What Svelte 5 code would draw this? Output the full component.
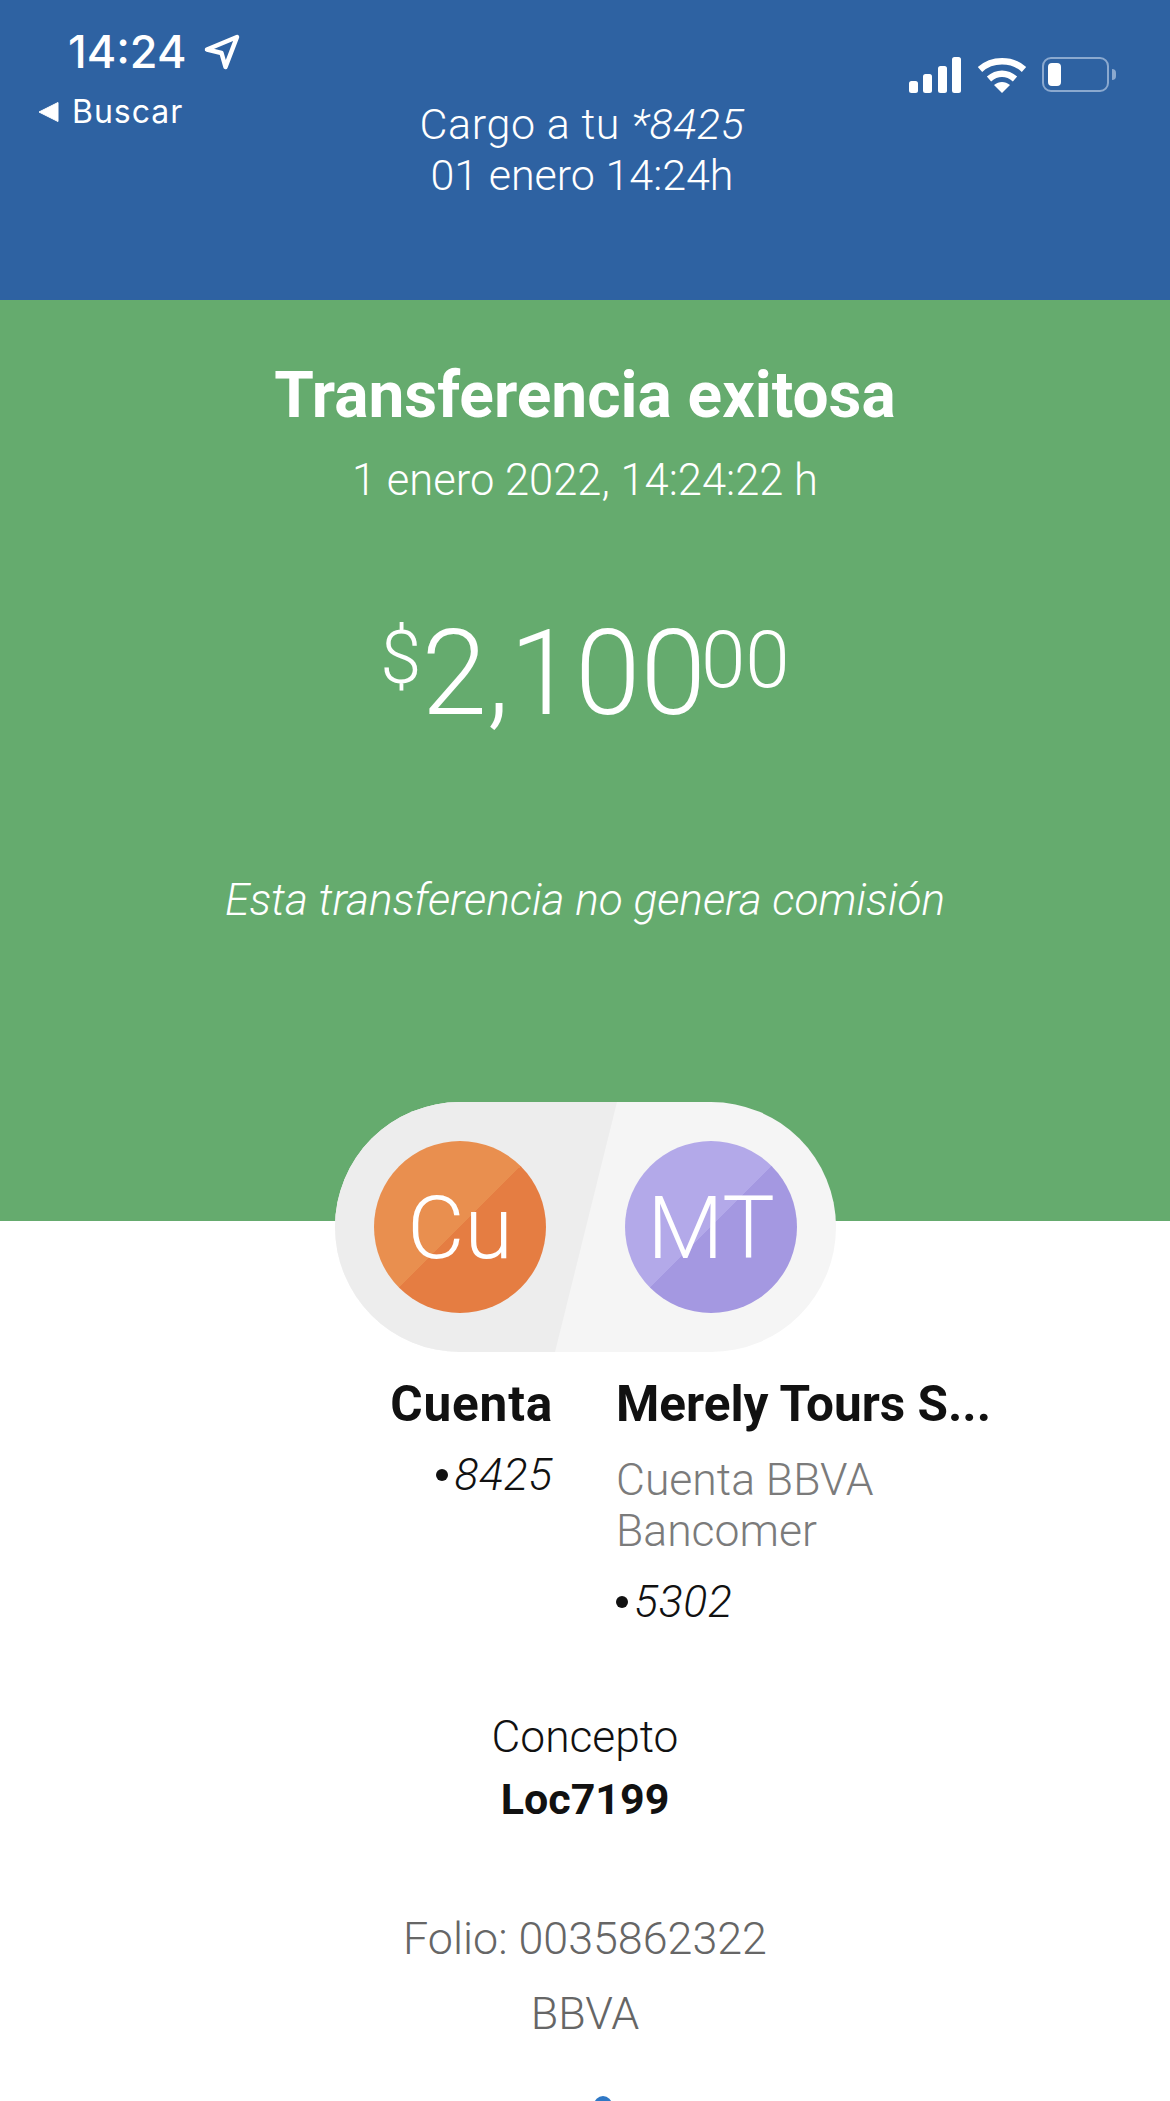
<script>
	const cuenta = { initials: 'Cu', name: 'Cuenta', digits: '8425' };
	const destino = { initials: 'MT', name: 'Merely Tours S...', bank: 'Cuenta BBVA Bancomer', digits: '5302' };
</script>

<div class="page">
	<header class="top">
		<div class="status">
			<div class="left">
				<div class="time">
					14:24
					<svg width="36" height="36" viewBox="0 0 36 36" fill="none">
						<path d="M3 15.5 33 3 21.5 33 17.5 19z" stroke="#fff" stroke-width="4.5" stroke-linejoin="round" />
					</svg>
				</div>
				<div class="back">
					<svg width="22" height="22" viewBox="0 0 22 22"><path d="M1 11 20 1.5v19z" fill="#fff" stroke="#fff" stroke-linejoin="round" /></svg>
					Buscar
				</div>
			</div>
			<div class="icons">
				<svg width="53" height="36" viewBox="0 0 53 36" fill="#fff">
					<rect x="0" y="24" width="9" height="12" rx="2.5" />
					<rect x="14" y="17" width="9" height="19" rx="2.5" />
					<rect x="29" y="9" width="9" height="27" rx="2.5" />
					<rect x="43" y="0" width="9" height="36" rx="2.5" />
				</svg>
				<svg width="50" height="37" viewBox="0 0 50 37" fill="none">
					<path d="M3 13.5C15 2.5 35 2.5 47 13.5" stroke="#fff" stroke-width="6.5" />
					<path d="M12 23c8-7 18-7 26 0" stroke="#fff" stroke-width="6.5" />
					<path d="M17 29c5-4 11-4 16 0l-8 8z" fill="#fff" />
				</svg>
				<div class="battery">
					<div class="shell"><span class="charge"></span></div>
					<span class="nub"></span>
				</div>
			</div>
		</div>
		<div class="cargo">
			<p class="first">Cargo a tu <em>*8425</em></p>
			<p>01 enero 14:24h</p>
		</div>
	</header>

	<section class="hero">
		<h1>Transferencia exitosa</h1>
		<p class="date">1 enero 2022, 14:24:22 h</p>
		<p class="amount"><sup class="sign">$</sup>2,100<sup class="cents">00</sup></p>
		<p class="fee">Esta transferencia no genera comisión</p>
	</section>

	<div class="pill">
		<span class="avatar orange">{cuenta.initials}</span>
		<span class="avatar purple">{destino.initials}</span>
	</div>

	<div class="parties">
		<div class="party from">
			<h2>{cuenta.name}</h2>
			<p class="digits"><i></i><em>{cuenta.digits}</em></p>
		</div>
		<div class="party to">
			<h2>{destino.name}</h2>
			<p class="bank">{destino.bank}</p>
			<p class="digits"><i></i><em>{destino.digits}</em></p>
		</div>
	</div>

	<div class="concept">
		<p>Concepto</p>
		<strong>Loc7199</strong>
	</div>

	<div class="folio">
		<p>Folio: 0035862322</p>
		<p>BBVA</p>
	</div>

	<div class="dot"></div>
</div>

<style>
	:global(body) {
		margin: 0;
		background: #fff;
	}

	.page {
		width: 1170px;
		height: 2101px;
		overflow: hidden;
		font-family: Roboto, "Noto Sans", sans-serif;
		font-weight: 300;
		color: #111;
	}

	p, h1, h2 {
		margin: 0;
	}

	.top {
		height: 300px;
		background: #2e62a2;
		color: #fff;
		display: grid;
		box-sizing: border-box;
	}

	.status, .cargo {
		grid-area: 1 / 1;
	}

	.status {
		display: flex;
		justify-content: space-between;
		align-items: flex-start;
		padding: 25px 54px 0 38px;
		font-family: Inter, sans-serif;
	}

	.time {
		display: flex;
		align-items: center;
		gap: 18px;
		margin-left: 30px;
		font-size: 45px;
		line-height: 54px;
		font-weight: 500;
	}

	.back {
		display: flex;
		align-items: center;
		gap: 12px;
		margin-top: 14px;
		font-size: 32px;
		line-height: 38px;
		font-weight: 400;
		letter-spacing: 1px;
	}

	.icons {
		display: flex;
		align-items: center;
		gap: 15px;
		margin-top: 31px;
	}

	.battery {
		display: flex;
		align-items: center;
		gap: 3px;
	}

	.shell {
		width: 67px;
		height: 35px;
		box-sizing: border-box;
		border: 2px solid #8ba9cf;
		border-radius: 9px;
		padding: 4px;
	}

	.charge {
		display: block;
		width: 13px;
		height: 23px;
		background: #fff;
		border-radius: 4px;
	}

	.nub {
		width: 4px;
		height: 11px;
		background: #8ba9cf;
		border-radius: 0 6px 6px 0;
	}

	.cargo {
		padding: 99px 6px 0 0;
		text-align: center;
		font-size: 43px;
		line-height: 51px;
	}

	.first {
		letter-spacing: 0.6px;
	}

	.hero {
		height: 921px;
		box-sizing: border-box;
		padding-top: 60px;
		background: #65ab6e;
		color: #fff;
		text-align: center;
	}

	h1 {
		font-size: 64px;
		line-height: 72px;
		font-weight: 700;
	}

	.date {
		margin-top: 23px;
		font-size: 43.5px;
		line-height: 52px;
	}

	.amount {
		margin-top: 102px;
		font-size: 118px;
		line-height: 130px;
	}

	.amount sup {
		line-height: 0;
	}

	.sign {
		font-size: 74px;
		vertical-align: 31px;
	}

	.cents {
		font-size: 80px;
		vertical-align: 27px;
		margin-left: -5px;
	}

	.fee {
		margin-top: 135px;
		font-size: 44.2px;
		line-height: 52px;
		font-style: italic;
	}

	.pill {
		position: relative;
		width: 501px;
		height: 250px;
		margin: -119px 0 0 335px;
		box-sizing: border-box;
		padding: 39px 39px 0;
		display: flex;
		justify-content: space-between;
		background: #f5f5f5;
		border-radius: 125px;
		overflow: hidden;
	}

	.pill::before {
		content: "";
		position: absolute;
		inset: 0;
		background: #ededed;
		clip-path: polygon(0 0, 282px 0, 220px 100%, 0 100%);
	}

	.avatar {
		position: relative;
		width: 172px;
		height: 172px;
		border-radius: 50%;
		display: flex;
		align-items: center;
		justify-content: center;
		color: #fff;
		font-size: 88px;
		font-family: Roboto, sans-serif;
		font-weight: 300;
	}

	.orange {
		background: linear-gradient(135deg, #e98f4f 50%, #e57d42 50%);
	}

	.purple {
		background: linear-gradient(135deg, #b3a9e9 50%, #a498e1 50%);
	}

	.parties {
		display: flex;
		gap: 63px;
		margin-top: 22px;
	}

	.party {
		flex: none;
	}

	.from {
		width: 553px;
		text-align: right;
	}

	.to {
		width: 400px;
	}

	h2 {
		font-size: 49.5px;
		line-height: 60px;
		font-weight: 700;
		white-space: nowrap;
	}

	.from h2 {
		letter-spacing: 0.8px;
	}

	.digits {
		font-size: 44.5px;
		line-height: 50px;
		display: flex;
		align-items: center;
		gap: 6px;
	}

	.digits em {
		letter-spacing: 0.7px;
	}

	.from .digits {
		justify-content: flex-end;
		margin-top: 16px;
	}

	.to .digits {
		margin-top: 20px;
	}

	.digits i {
		width: 12px;
		height: 12px;
		background: #111;
		border-radius: 50%;
	}

	.bank {
		margin-top: 21px;
		font-size: 44.5px;
		line-height: 51px;
		color: #7b7b7b;
		width: 300px;
	}

	.concept {
		margin-top: 84px;
		text-align: center;
		font-size: 44.3px;
		line-height: 52px;
	}

	.concept p {
		margin-bottom: 10px;
	}

	.concept strong {
		display: block;
		font-size: 43px;
		font-weight: 700;
	}

	.folio {
		margin-top: 88px;
		text-align: center;
		font-size: 44.8px;
		line-height: 52px;
		color: #666;
	}

	.folio p + p {
		margin-top: 23px;
	}

	.dot {
		width: 18px;
		height: 18px;
		margin: 56px 0 0 594px;
		background: #2f78c5;
		border-radius: 50%;
	}
</style>
